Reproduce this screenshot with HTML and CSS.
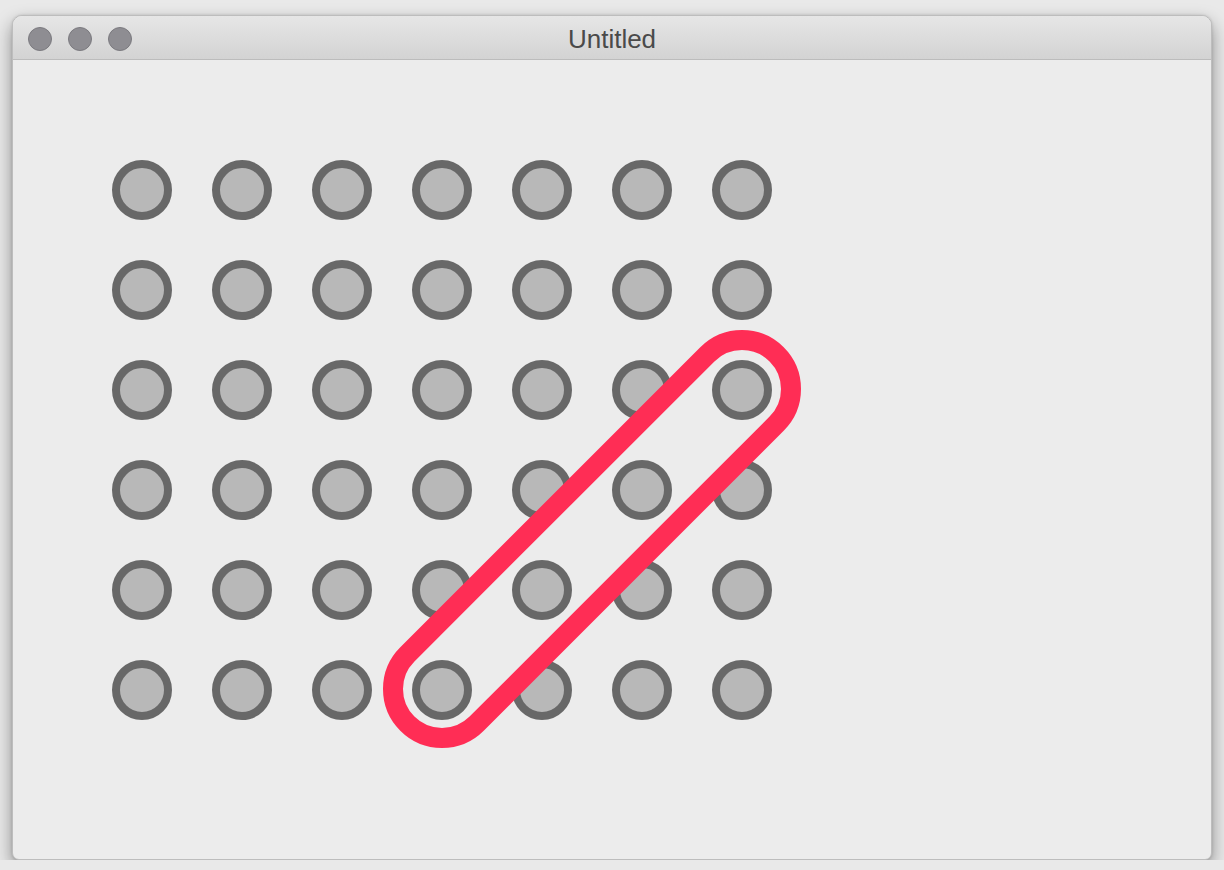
FILE: index.html
```html
<!DOCTYPE html>
<html lang="en">
<head>
<meta charset="UTF-8">
<meta name="viewport" content="width=device-width, initial-scale=1.0">
<title>Untitled</title>
<link rel="stylesheet" href="styles.css">
</head>
<body>
<div class="window">
    <div class="titlebar">
        <div class="lights">
            <span class="light"></span>
            <span class="light"></span>
            <span class="light"></span>
        </div>
        <div class="title">Untitled</div>
        <div></div>
    </div>
    <div class="content">
        <div class="grid" id="grid">
            <!-- selection capsule drawn over the dots -->
            <svg class="capsule" width="640" height="560" viewBox="0 0 640 560">
                <rect x="218.87" y="330" width="522.26" height="98" rx="49" ry="49"
                      transform="rotate(-45 480 379)" fill="none" stroke="#ff2d55" stroke-width="20"/>
            </svg>
        </div>
    </div>
</div>
<script>
    const grid = document.getElementById('grid');
    for (let i = 0; i < 42; i++) {
        const dot = document.createElement('div');
        dot.className = 'dot';
        grid.insertBefore(dot, grid.firstChild);
    }
</script>
</body>
</html>
```

FILE: styles.css
```css
body {
    margin: 0;
    padding: 15px 0 0 12px;
    background-color: #e9e9e9;
    font-family: "Liberation Sans", Arial, sans-serif;
}
.window {
    width: 1200px;
    height: 845px;
    box-sizing: border-box;
    border: 1px solid #bdbdbd;
    border-radius: 10px 10px 7px 7px;
    background-color: #ececec;
    box-shadow: 0 8px 18px rgba(0, 0, 0, 0.4), 0 0 3px rgba(0, 0, 0, 0.15);
    overflow: hidden;
}
.titlebar {
    height: 43px;
    border-bottom: 1px solid #bcbcbc;
    background: linear-gradient(#e6e6e6, #d3d3d3);
    display: grid;
    grid-template-columns: 1fr auto 1fr;
    align-items: center;
}
.lights {
    display: flex;
    gap: 16px;
    padding-left: 15px;
    padding-top: 2px;
}
.light {
    width: 24px;
    height: 24px;
    box-sizing: border-box;
    border-radius: 50%;
    background-color: #8e8d92;
    border: 1px solid #7b7a7f;
}
.title {
    font-size: 26px;
    color: #4a4a4a;
    padding-top: 3px;
}
.content {
    padding: 100px 0 0 99px;
}
.grid {
    position: relative;
    display: grid;
    grid-template-columns: repeat(7, 60px);
    grid-auto-rows: 60px;
    gap: 40px;
    width: 640px;
}
.dot {
    box-sizing: border-box;
    border-radius: 50%;
    border: 8px solid #686868;
    background-color: #b8b8b8;
}
.capsule {
    position: absolute;
    left: 0;
    top: 0;
    overflow: visible;
}
```
